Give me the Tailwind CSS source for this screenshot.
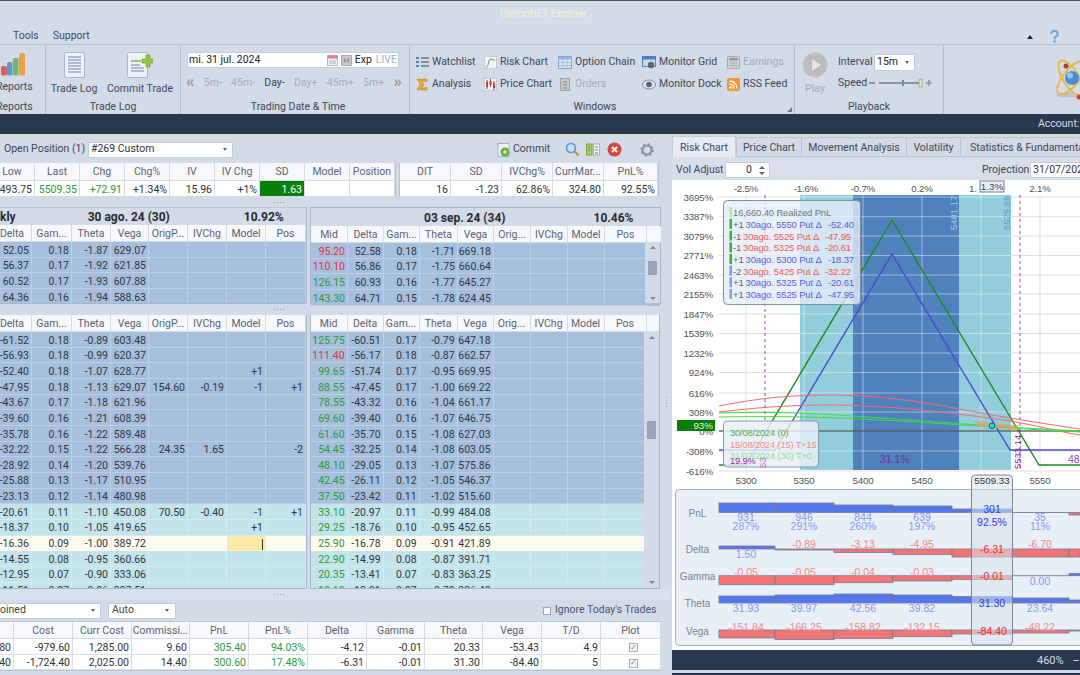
<!DOCTYPE html>
<html lang="en">
<head>
<meta charset="UTF-8">
<script src="https://cdn.jsdelivr.net/npm/@tailwindcss/browser@4"></script>
<title>OptionNET Explorer</title>
</head>
<body class="w-[1080px] h-[675px] overflow-hidden bg-[#d3dbe9] font-['Roboto',sans-serif] text-[10.5px] text-[#3f4654] leading-none">

<!-- title + menu -->
<header class="h-[45px] border-t border-[#555] bg-[#d5dce9] border-b-[1px] border-b-[#b7c2d4]">
  <div class="h-[24px] pl-[500px] pt-[8px] text-[10px] text-[#f3f0cd]">OptionNET Explorer</div>
  <div class="flex items-center h-[19px] pl-[13px] gap-[14px] text-[#3b4a62] pt-[4px]">
    <span>Tools</span><span>Support</span>
    <span class="ml-auto flex items-center gap-[17px] pr-[21px]">
      <span class="w-0 h-0 border-x-[3px] border-x-transparent border-b-[4px] border-b-[#222]"></span>
      <svg width="9" height="13" viewBox="0 0 10 14"><path d="M1.500 4a3.500 3.300 0 1 1 5 3c-1 .7-1.500 1.200-1.500 3" fill="none" stroke="#6fa8dc" stroke-width="2.400"/><circle cx="5" cy="12.500" r="1.400" fill="#6fa8dc"/></svg>
    </span>
  </div>
</header>

<!-- ribbon -->
<section class="flex h-[69px] bg-[#d3dbe8]">
  <div class="w-[46px] shrink-0 border-r border-[#b4c0d2] flex flex-col overflow-hidden">
    <div class="h-[53px] pt-[8px]">
      <svg class="ml-[1px]" width="25" height="23" viewBox="0 0 25 23"><rect x="0" y="13" width="6" height="9.500" rx="1.500" fill="#d9605a"/><rect x="6" y="9" width="5.500" height="13.500" rx="1.500" fill="#5b9bd5"/><rect x="12" y="5" width="5.500" height="17.500" rx="1.500" fill="#7fb85a"/><rect x="18" y="0" width="6" height="22.500" rx="1.500" fill="#eda04a"/></svg>
      <div class="-ml-[4px] mt-[6px] whitespace-nowrap">Reports</div>
    </div>
    <div class="-ml-[4px] h-[16px] flex items-center pt-[2px]">Reports</div>
  </div>

  <div class="w-[135px] shrink-0 border-r border-[#b4c0d2] flex flex-col">
    <div class="h-[53px] flex pt-[7px]">
      <div class="w-[62px] flex flex-col items-center -ml-[3px]">
        <svg width="21" height="26" viewBox="0 0 21 26"><rect x=".5" y=".5" width="20" height="25" rx="1.500" fill="#eef1f7" stroke="#a9b8ce"/><path d="M4 5h13M4 8h13M4 11h13M4 14h13M4 17h13M4 20h13" stroke="#96a8c8" stroke-width="1.500"/></svg>
        <span class="mt-[6px] whitespace-nowrap">Trade Log</span>
      </div>
      <div class="flex flex-col items-center ml-[2px] w-[66px]">
        <svg width="26" height="26" viewBox="0 0 26 26"><rect x=".5" y=".5" width="20" height="25" rx="1.500" fill="#eef1f7" stroke="#a9b8ce"/><path d="M4 9h10" stroke="#7fb04a" stroke-width="1.500"/><path d="M4 13h9M4 16h13M4 19h13" stroke="#96a8c8" stroke-width="1.500"/><path d="M15 7h4V3h4v4h3v4h-3v4h-4v-4h-4z" fill="#8dc63f" stroke="#6fa02c" stroke-width=".6"/></svg>
        <span class="mt-[6px] whitespace-nowrap">Commit Trade</span>
      </div>
    </div>
    <div class="h-[16px] flex items-center justify-center pt-[2px]">Trade Log</div>
  </div>

  <div class="w-[229px] shrink-0 border-r border-[#b4c0d2] flex flex-col">
    <div class="h-[53px] pl-[6px] pt-[7px]">
      <div class="w-[212px] h-[16px] bg-white border border-[#c2cddd] flex items-center pl-[1px] pr-[1px] pt-[1px] text-[#222]">
        <span>mi. 31 jul. 2024</span>
        <svg class="ml-auto" width="11" height="11" viewBox="0 0 11 11"><rect x=".5" y=".5" width="10" height="10" fill="#f4f0f0" stroke="#b7b7c7"/><rect x=".5" y=".5" width="10" height="3" fill="#e27f8b"/><path d="M2 6h7M2 8h7" stroke="#9bb0d6"/></svg>
        <span class="ml-[3px] w-[11px] h-[11px] bg-[#c9c9c9] border border-[#aaa] text-[8px] text-[#777] flex items-center justify-center">H</span>
        <span class="ml-[3px]">Exp</span>
        <span class="ml-[4px] text-[#a9b2c3]">LIVE</span>
      </div>
      <div class="-ml-[1px] mt-[9px] w-[216px] flex justify-between items-center text-[#a7afbe]">
        <span class="text-[17px] text-[#9d9d9d] -mt-[4px] font-bold">«</span><span>5m-</span><span>45m-</span><span class="text-[#333f55]">Day-</span><span>Day+</span><span>45m+</span><span>5m+</span><span class="text-[17px] text-[#9d9d9d] -mt-[4px] font-bold">»</span>
      </div>
    </div>
    <div class="h-[16px] flex items-center justify-center pl-[6px] pt-[2px]">Trading Date &amp; Time</div>
  </div>

  <div class="relative w-[385px] shrink-0 border-r border-[#b4c0d2] flex flex-col">
    <div class="h-[53px] pl-[6px] pt-[6px] grid grid-cols-[68px_74px_84px_85px_auto] grid-rows-[22px_22px] items-center whitespace-nowrap">
      <div class="flex items-center gap-[3px]"><svg width="13" height="12" viewBox="0 0 13 12"><path d="M5 2h8M5 6h8M5 10h8" stroke="#444" stroke-width="1.200"/><rect y="1" width="3" height="2" fill="#4f81bd"/><rect y="5" width="3" height="2" fill="#4f81bd"/><rect y="9" width="3" height="2" fill="#4f81bd"/></svg>Watchlist</div>
      <div class="flex items-center gap-[3px]"><svg width="13" height="13" viewBox="0 0 13 13"><rect x=".5" y=".5" width="12" height="12" fill="#f3f5f8" stroke="#c4ccd8"/><path d="M2 11c3 0 2-8 5-8 2 0 2 2 4 1" fill="none" stroke="#4a9a4a"/></svg>Risk Chart</div>
      <div class="flex items-center gap-[3px]"><svg width="14" height="13" viewBox="0 0 14 13"><rect x=".5" y=".5" width="13" height="12" fill="#dbe8f6" stroke="#7fa3cf"/><rect x=".5" y=".5" width="13" height="3" fill="#8fb4de"/><path d="M5 3v10M9 3v10M1 6.500h12M1 9.500h12" stroke="#8fb0d8" stroke-width=".7"/></svg>Option Chain</div>
      <div class="flex items-center gap-[3px]"><svg width="14" height="13" viewBox="0 0 14 13"><rect x=".5" y=".5" width="13" height="10" fill="#c8daf0" stroke="#5b85b8"/><rect x=".5" y=".5" width="13" height="3" fill="#4f81bd"/><circle cx="9" cy="9" r="3.200" fill="#666"/></svg>Monitor Grid</div>
      <div class="flex items-center gap-[3px] text-[#a4acba]"><svg width="13" height="13" viewBox="0 0 13 13"><rect x=".5" y=".5" width="12" height="12" rx="1" fill="#d0d0d0" stroke="#aaa"/><rect x="2" y="2" width="9" height="2.500" fill="#999"/><path d="M3 7h7M3 9.500h7" stroke="#aaa"/></svg>Earnings</div>
      <div class="flex items-center gap-[3px]"><svg width="12" height="13" viewBox="0 0 12 13" class="mr-[1px]"><path d="M1 1h10v3L5.500 2.500 8 6.500 5.500 10.500 11 9v3H1l3-5.500z" fill="#e7a53f" stroke="#c07f20" stroke-width=".5"/></svg>Analysis</div>
      <div class="flex items-center gap-[3px]"><svg width="13" height="13" viewBox="0 0 13 13"><rect x=".5" y=".5" width="12" height="12" fill="#f3f5f8" stroke="#c4ccd8"/><path d="M3 2v9M6.500 1v8M10 3v9" stroke="#555"/><rect x="2" y="4" width="2" height="5" fill="#d13b3b"/><rect x="5.500" y="3" width="2" height="4" fill="#d13b3b"/><rect x="9" y="5" width="2" height="5" fill="#d13b3b"/></svg>Price Chart</div>
      <div class="flex items-center gap-[3px] text-[#a4acba]"><svg width="14" height="13" viewBox="0 0 14 13"><rect x="2.500" y=".5" width="9" height="12" fill="#c8c8c8" stroke="#a2a2a2"/><path d="M5 4h4M5 7h4M5 10h4" stroke="#888"/></svg>Orders</div>
      <div class="flex items-center gap-[3px]"><svg width="14" height="11" viewBox="0 0 14 11"><ellipse cx="7" cy="5.500" rx="6.500" ry="4.500" fill="#dfe6ee" stroke="#7d8ba0"/><circle cx="7" cy="5.500" r="2.800" fill="#55657c"/></svg>Monitor Dock</div>
      <div class="flex items-center gap-[3px]"><svg width="13" height="13" viewBox="0 0 13 13"><rect width="13" height="13" rx="2" fill="#ee9a2d"/><circle cx="3.500" cy="9.500" r="1.300" fill="#fff"/><path d="M2.500 6a4.500 4.500 0 0 1 4.500 4.500M2.500 3a7.500 7.500 0 0 1 7.500 7.500" fill="none" stroke="#fff" stroke-width="1.300"/></svg>RSS Feed</div>
    </div>
    <div class="h-[16px] flex items-center justify-center pr-[14px] pt-[2px]">Windows</div>
    <span class="absolute right-[2px] bottom-[2px] w-0 h-0 border-l-[5px] border-l-transparent border-b-[5px] border-b-[#6d7a8f]"></span>
  </div>

  <div class="w-[149px] shrink-0 border-r border-[#b4c0d2] flex flex-col">
    <div class="h-[53px] flex pl-[7px] pt-[7px]">
      <div class="w-[26px] flex flex-col items-center text-[#a4acba]">
        <svg width="26" height="26" viewBox="0 0 26 26"><circle cx="13" cy="13" r="12.500" fill="#bcbcbc" stroke="#cfcfcf"/><path d="M10 7l9 6-9 6z" fill="#e3e3e3"/></svg>
        <span class="mt-[6px]">Play</span>
      </div>
      <div class="ml-[10px]">
        <div class="flex items-center h-[20px]"><span class="w-[36px] pt-[1px]">Interval</span><span class="w-[41px] h-[17px] bg-white border border-[#c2cddd] flex items-center justify-between px-[2px] text-[#222]">15m<span class="w-0 h-0 mr-[3px] border-x-[2px] border-x-transparent border-t-[3px] border-t-[#666]"></span></span></div>
        <div class="flex items-center h-[20px] mt-[1px]"><span class="w-[28px] pt-[1px]">Speed</span>
          <svg class="ml-[3px]" width="64" height="10" viewBox="0 0 64 10"><path d="M0 5h6M10 5h41" stroke="#8896ab" stroke-width="2"/><rect x="33" y="2" width="2" height="6" fill="#7b8a9f"/><rect x="50" y="1" width="3" height="8" fill="#f4e8a8" stroke="#8a8a70" stroke-width=".6"/><path d="M57 5h6M60 2v6" stroke="#8896ab" stroke-width="1.500"/></svg>
        </div>
      </div>
    </div>
    <div class="h-[16px] flex items-center justify-center pt-[2px]">Playback</div>
  </div>

  <div class="flex-1 flex justify-end pt-[10px] overflow-hidden">
    <svg width="30" height="46" viewBox="0 0 30 46">
      <ellipse cx="18" cy="40" rx="12" ry="2.500" fill="#bfc4cc"/>
      <ellipse cx="21" cy="23" rx="8" ry="20" fill="none" stroke="#e3b945" stroke-width="1.800" transform="rotate(-32 21 23)"/>
      <ellipse cx="21" cy="23" rx="8" ry="20" fill="none" stroke="#e3b945" stroke-width="1.800" transform="rotate(38 21 23)"/>
      <circle cx="22" cy="23" r="7" fill="#4f8ccf"/><circle cx="20" cy="20.500" r="3" fill="#9cc8ef"/>
      <circle cx="16" cy="11" r="2.500" fill="#a5472e"/><circle cx="29" cy="42" r="2.500" fill="#dd3b3b"/>
    </svg>
  </div>
</section>

<div class="h-[20px] bg-[#29374f] text-[#d4dbe6] flex items-center pl-[1038px] whitespace-nowrap">Account:</div>
<div class="h-[1px] bg-[#e5dfaf]"></div>

<main class="flex h-[540px]">
  <!-- left side -->
  <div class="w-[670px] shrink-0">
    <div class="h-[28px] flex items-center pl-[4px] pr-[16px] pt-[1px] whitespace-nowrap">
      <span class="w-[84px] shrink-0">Open Position (1)</span>
      <div class="shrink-0 w-[145px] h-[16px] bg-white border border-[#c2cddd] flex items-center px-[2px] text-[#333]">#269 Custom<span class="ml-auto mr-[3px] w-0 h-0 border-x-[2.500px] border-x-transparent border-t-[3px] border-t-[#666]"></span></div>
      <svg class="ml-[264px] shrink-0" width="14" height="14" viewBox="0 0 14 14"><rect x="1" y=".5" width="11" height="13" fill="#eef1f7" stroke="#9fb0c8"/><circle cx="8" cy="9" r="4.500" fill="#6dac3d"/><path d="M6 9h4M8 7v4" stroke="#fff"/></svg>
      <span class="ml-[2px] w-[35px] shrink-0">Commit</span>
      <svg class="ml-[17px] shrink-0" width="15" height="15" viewBox="0 0 15 15"><circle cx="6" cy="6" r="4.500" fill="#c7e0f6" stroke="#5e96cc" stroke-width="1.600"/><path d="M9.500 9.500l4 4" stroke="#d68b34" stroke-width="2.200"/></svg>
      <svg class="ml-[6px] shrink-0" width="14" height="13" viewBox="0 0 14 13"><rect x=".5" y="1" width="5.500" height="11" fill="#a5cf6b" stroke="#7ba444"/><rect x="7.500" y="1" width="6" height="11" fill="#f4f6f8" stroke="#a7b1bd"/><path d="M2 4h2M2 7h2M9 4h3M9 7h3M9 10h3" stroke="#63813a"/></svg>
      <svg class="ml-[7px] shrink-0" width="15" height="15" viewBox="0 0 15 15"><circle cx="7.500" cy="7.500" r="7" fill="#d8453f"/><path d="M5 5l5 5M10 5l-5 5" stroke="#fff" stroke-width="1.800"/></svg>
      <svg class="ml-[18px] shrink-0" width="14" height="14" viewBox="0 0 14 14"><circle cx="7" cy="7" r="4.500" fill="none" stroke="#8895a8" stroke-width="2.200"/><circle cx="7" cy="7" r="6" fill="none" stroke="#8895a8" stroke-width="1.500" stroke-dasharray="2 2.700"/></svg>
    </div>

    <!-- position summary -->
    <div class="h-[34px] flex">
      <div class="w-[396px] overflow-hidden border-r border-[#b9c4d5]"><div class="grid grid-cols-[45px_repeat(8,45px)] -ml-[10px] w-[405px]" id="summary"></div></div>
      <div class="ml-[3px] w-[260px] border-x border-[#b9c4d5] grid grid-cols-[51px_51px_51px_51px_54px]" id="summary2"></div>
    </div>
    <div class="h-[10px] flex items-center justify-center pr-[112px]"><span class="w-[13px] h-[3px] bg-[radial-gradient(#8fa0b7_40%,transparent_45%)] bg-[length:3px_3px]"></span></div>

    <div class="flex h-[97px]">
      <div class="w-[307px] overflow-hidden border-r border-b border-[#a9b5c8]">
        <div class="h-[18px] flex items-center relative font-bold text-[12px] text-[#2b2b2b] border-t border-[#b9c4d5] whitespace-nowrap pt-[1px]"><span>kly</span><span class="ml-[72px]">30 ago. 24 (30)</span><span class="ml-[74px]">10.92%</span></div>
        <div class="-ml-[7px]" id="chainA"></div>
      </div>
      <div class="ml-[3px] w-[351px] relative border border-t-[1px] border-[#a9b5c8]">
        <div class="h-[18px] flex items-center font-bold text-[12px] text-[#2b2b2b] pl-[113px] whitespace-nowrap pt-[1px]"><span>03 sep. 24 (34)</span><span class="ml-[88px]">10.46%</span></div>
        <div id="chainB"></div>
        <div class="absolute right-0 top-[35px] bottom-0 w-[15px] bg-[#d3dbe8] flex flex-col items-center justify-between py-[3px]"><span class="w-0 h-0 border-x-[3px] border-x-transparent border-b-[3px] border-b-[#7d8798]"></span><span class="w-[9px] h-[14px] bg-[#9aa6b8] -mt-[10px]"></span><span class="w-0 h-0 border-x-[3px] border-x-transparent border-t-[3px] border-t-[#7d8798]"></span></div>
      </div>
    </div>
    <div class="h-[11px] flex items-center justify-center pr-[112px]"><span class="w-[13px] h-[3px] bg-[radial-gradient(#8fa0b7_40%,transparent_45%)] bg-[length:3px_3px]"></span></div>

    <div class="flex h-[274px]">
      <div class="w-[307px] overflow-hidden border-r border-b border-[#a9b5c8]"><div class="-ml-[7px]" id="chainC"></div></div>
      <div class="ml-[3px] w-[351px] overflow-hidden relative border-x border-b border-[#a9b5c8]">
        <div id="chainD"></div>
        <div class="absolute right-0 top-[17px] bottom-0 w-[15px] bg-[#d3dbe8] flex flex-col items-center py-[4px]"><span class="w-0 h-0 border-x-[3px] border-x-transparent border-b-[3px] border-b-[#7d8798]"></span><span class="w-[9px] h-[18px] bg-[#9aa6b8] mt-[82px]"></span><span class="mt-auto w-0 h-0 border-x-[3px] border-x-transparent border-t-[3px] border-t-[#7d8798]"></span></div>
      </div>
      <div class="w-[10px] flex items-center justify-center pb-[100px]"><span class="w-[3px] h-[12px] ml-[3px] bg-[radial-gradient(#8fa0b7_40%,transparent_45%)] bg-[length:3px_3px]"></span></div>
    </div>
    <div class="h-[11px] flex items-center justify-center pr-[112px] bg-[#d9dfeb]"><span class="w-[13px] h-[3px] bg-[radial-gradient(#8fa0b7_40%,transparent_45%)] bg-[length:3px_3px]"></span></div>

    <div class="h-[21px] flex items-center">
      <div class="-ml-[1px] w-[102px] h-[16px] bg-white border border-[#c2cddd] flex items-center pr-[2px] text-[#444] whitespace-nowrap">oined<span class="ml-auto mr-[3px] w-0 h-0 border-x-[2.500px] border-x-transparent border-t-[3px] border-t-[#666]"></span></div>
      <div class="ml-[7px] w-[68px] h-[16px] bg-white border border-[#c2cddd] flex items-center px-[3px] text-[#444]">Auto<span class="ml-auto mr-[3px] w-0 h-0 border-x-[2.500px] border-x-transparent border-t-[3px] border-t-[#666]"></span></div>
      <span class="ml-[367px] w-[8px] h-[8px] bg-white border border-[#9ba7b9] shrink-0"></span>
      <span class="ml-[4px] whitespace-nowrap text-[#4b5464]">Ignore Today's Trades</span>
    </div>
    <div class="w-[661px] border-y border-[#b9c4d5] border-r" id="trades"></div>
  </div>

  <!-- right side -->
  <div class="w-[410px] pl-[2px] overflow-hidden">
    <div class="h-[22px] flex items-end whitespace-nowrap">
      <span class="shrink-0 w-[64px] h-[21px] bg-[#e7ecf4] border border-b-0 border-[#c4cede] flex items-center justify-center pt-[2px]">Risk Chart</span>
      <span class="shrink-0 w-[66px] h-[20px] bg-[#d3dbe8] border border-[#b9c4d5] flex items-center justify-center pt-[2px]">Price Chart</span>
      <span class="shrink-0 w-[105px] h-[20px] bg-[#d3dbe8] border border-l-0 border-[#b9c4d5] flex items-center justify-center pt-[2px]">Movement Analysis</span>
      <span class="shrink-0 w-[54px] h-[20px] bg-[#d3dbe8] border border-l-0 border-[#b9c4d5] flex items-center justify-center pt-[2px]">Volatility</span>
      <span class="shrink-0 w-[140px] h-[20px] bg-[#d3dbe8] border border-l-0 border-[#b9c4d5] flex items-center pl-[9px] pt-[2px]">Statistics &amp; Fundamentals</span>
    </div>
    <div class="h-[23px] bg-[#d8dfeb] flex items-center pl-[4px] pt-[3px] whitespace-nowrap">
      <span class="w-[45px] shrink-0">Vol Adjust</span>
      <div class="shrink-0 ml-[4px] w-[45px] h-[16px] bg-white border border-[#c2cddd] flex items-center justify-end pr-[4px] text-[#333]">
        <span class="mr-[7px]">0</span>
        <span class="flex flex-col gap-[3px]"><span class="w-0 h-0 border-x-[3px] border-x-transparent border-b-[3px] border-b-[#666]"></span><span class="w-0 h-0 border-x-[3px] border-x-transparent border-t-[3px] border-t-[#666]"></span></span>
      </div>
      <span class="ml-[212px] w-[48px] shrink-0">Projection</span>
      <div class="shrink-0 w-[60px] h-[16px] bg-white border border-[#c2cddd] flex items-center pl-[2px] overflow-hidden text-[#333]">31/07/2024</div>
    </div>

    <svg id="chart" class="block bg-white font-['Liberation_Sans',sans-serif]" width="408" height="470" viewBox="672 180 408 470">
      <g id="grid"></g>
      <rect x="800" y="195" width="211" height="275" fill="#92cddc"/>
      <rect x="853" y="195" width="106" height="275" fill="#4f81bd"/>
      <g id="gridTop"></g>
      <path d="M765 195V470M1020 195V470" stroke="#a03fa8" stroke-dasharray="3 3"/>
      <line x1="719" y1="431" x2="1080" y2="431" stroke="#333"/>
      <path d="M719 465H746L892 220L1039 465H1080" fill="none" stroke="#1d8a1d" stroke-width="1.400"/>
      <path d="M719 450H775L892 254L1010 450H1080" fill="none" stroke="#4a4ad0" stroke-width="1.400"/>
      <path d="M719 406C770 396 800 395 837 395C900 395 960 410 1010 418C1040 423 1060 426 1080 429" fill="none" stroke="#f36a6a"/>
      <path d="M719 412C770 406 800 405 837 405C900 406 970 415 1010 421C1040 426 1060 432 1080 435" fill="none" stroke="#f36a6a"/>
      <path d="M719 413C780 411 830 414 880 418C940 422 1000 427 1080 431" fill="none" stroke="#3fdc3f"/>
      <path d="M719 417C780 416 830 417 880 420C940 423 1000 428 1080 432" fill="none" stroke="#3fdc3f"/>
      <path d="M975 423.500L1018 428" stroke="#d9a56a" stroke-width="5" opacity=".75"/>
      <circle cx="992" cy="425.700" r="2.800" fill="#10e0f0" stroke="#0e5a64"/>

      <g font-size="9.500">
        <text transform="translate(957 230) rotate(-90)" fill="#a9c6e2">5481.17</text>
        <text transform="translate(1010 230) rotate(-90)" fill="#5f9fd0">5525.89</text>
      </g>
      <text transform="translate(1021 469) rotate(-90)" font-size="9.500" fill="#8e2f9e">5533.14</text>
      <text x="880" y="463" font-size="10.500" fill="#7a2d9c">31.1%</text>
      <text x="1068" y="463" font-size="10.500" fill="#9b3fb0">48.</text>
      <g id="labels" font-size="9.800" letter-spacing="-.2" fill="#555"></g>

      <rect x="677" y="420" width="38" height="11" fill="#058005"/>
      <text x="713" y="429" text-anchor="end" font-size="9.800" fill="#e4f5e4">93%</text>

      <rect x="980" y="181" width="24" height="11" fill="#eef1f5" stroke="#6d7a8f"/>
      <text x="992" y="190" text-anchor="middle" font-size="9.800" fill="#444">1.3%</text>

      <!-- position tooltip -->
      <rect x="723.500" y="200.500" width="137" height="104" rx="4" fill="#e3ecf6" fill-opacity=".8" stroke="#7f8fa6"/>
      <g id="tip" font-size="9.500" letter-spacing="-.15"></g>

      <!-- date tooltip -->
      <rect x="723.500" y="421" width="95" height="46" rx="4" fill="#e6eef6" fill-opacity=".85" stroke="#8a99ad"/>
      <g font-size="9.300" letter-spacing="-.15">
        <text x="730" y="436" fill="#5aa85a">30/08/2024 (0)</text>
        <text x="730" y="447.500" fill="#f58b8b">15/08/2024 (15) T+15</text>
        <text x="730" y="459" fill="#8ee08e">31/07/2024 (30) T+0</text>
        <text x="730" y="463.500" fill="#8e2f9e">19.9%</text>
      </g>
      <text transform="translate(766 468) rotate(-90)" font-size="9.800" fill="#c078c8">53</text>

      <!-- greeks panel -->
      <rect x="675.500" y="489.500" width="420" height="156" rx="4" fill="#e8eff7" stroke="#a3aebd"/>
      <g id="greeks"></g>

      <!-- cursor -->
      <rect x="971.500" y="475" width="41" height="170" rx="4" fill="#d8e1ed" fill-opacity=".55" stroke="#7b8797"/>
      <text x="992" y="484" text-anchor="middle" font-size="9.800" fill="#333">5509.33</text>
      <g id="cursor" font-size="10.500" text-anchor="middle"></g>
    </svg>

    <div class="h-[20px] bg-[#29374f] text-[#d6dde8] flex items-center pl-[365px] whitespace-nowrap text-[11px]">460%<span class="ml-[9px]">–</span></div>
    <div class="h-[3px]"></div>
    <div class="h-[2px] bg-[#29374f]"></div>
  </div>
</main>

<script>
  // rows: [bg, cells...]
  const blue = 'bg-[#a6bfdd]', cyan = 'bg-[#c3e4ea]', cream = 'bg-[#fffbee]';
  const hd = 'h-[17px] bg-[#f6f8fb] border-r border-b border-[#d3dbe7] flex items-center justify-center pt-[2px] text-[#5b6373] overflow-hidden whitespace-nowrap';
  const td = 'border-r border-b border-white/25 flex items-center justify-end pr-[2px] pt-[3px] overflow-hidden whitespace-nowrap';

  const dark = 'text-[#2f3540]', green = 'text-[#2a9a3a]', red = 'text-[#e8303c]';

  function headerRow(cols, names) {
    return `<div class="grid ${cols}">` + names.map(n => `<div class="${hd}">${n}</div>`).join('') + '</div>';
  }
  function chain(id, cols, names, rows, nameColor) {
    let html = headerRow(cols, names);
    rows.forEach(r => {
      const cells = r.cells.map((c, i) => {
        let cls = td + ' ' + (nameColor && i === 0 ? (r.red ? red : green) : dark);
        if (r.caret === i) cls += ' bg-[#fde9a8]';
        const caret = r.caret === i ? '<span class="w-px h-[11px] bg-[#333]"></span>' : '';
        return `<div class="${cls}">${c}${caret}</div>`;
      }).join('');
      html += `<div class="grid ${cols} h-[15.67px] ${r.bg}">${cells}</div>`;
    });
    document.getElementById(id).innerHTML = html;
  }

  const L = 'grid-cols-[39px_40px_39px_38px_39px_39px_39px_40px]';
  const LN = ['Delta', 'Gam...', 'Theta', 'Vega', 'OrigP...', 'IVChg', 'Model', 'Pos'];
  const RN = ['Mid', 'Delta', 'Gam...', 'Theta', 'Vega', 'Orig...', 'IVChg', 'Model', 'Pos', ''];
  const RC = 'grid-cols-[37px_36px_36px_38px_36px_37px_37px_37px_42px_15px]';

  const mk = (bg, cells, extra) => Object.assign({ bg, cells: cells.concat(Array(8 - cells.length).fill('')) }, extra);

  chain('chainA', L, LN, [
    ['52.05', '0.18', '-1.87', '629.07'], ['56.37', '0.17', '-1.92', '621.85'],
    ['60.52', '0.17', '-1.93', '607.88'], ['64.36', '0.16', '-1.94', '588.63']
  ].map(c => mk(blue, c)));

  chain('chainC', L, LN, [
    mk(blue, ['-61.52', '0.18', '-0.89', '603.48']),
    mk(blue, ['-56.93', '0.18', '-0.99', '620.37']),
    mk(blue, ['-52.40', '0.18', '-1.07', '628.77', '', '', '+1', '']),
    mk(blue, ['-47.95', '0.18', '-1.13', '629.07', '154.60', '-0.19', '-1', '+1']),
    mk(blue, ['-43.67', '0.17', '-1.18', '621.96']),
    mk(blue, ['-39.60', '0.16', '-1.21', '608.39']),
    mk(blue, ['-35.78', '0.16', '-1.22', '589.48']),
    mk(blue, ['-32.22', '0.15', '-1.22', '566.28', '24.35', '1.65', '', '-2']),
    mk(blue, ['-28.92', '0.14', '-1.20', '539.76']),
    mk(blue, ['-25.88', '0.13', '-1.17', '510.95']),
    mk(blue, ['-23.13', '0.12', '-1.14', '480.98']),
    mk(cyan, ['-20.61', '0.11', '-1.10', '450.08', '70.50', '-0.40', '-1', '+1']),
    mk(cyan, ['-18.37', '0.10', '-1.05', '419.65', '', '', '+1', '']),
    mk(cream, ['-16.36', '0.09', '-1.00', '389.72'], { caret: 6 }),
    mk(cyan, ['-14.55', '0.08', '-0.95', '360.66']),
    mk(cyan, ['-12.95', '0.07', '-0.90', '333.06']),
    mk(cyan, ['-11.51', '0.07', '-0.86', '307.51'])
  ]);

  const mkR = (bg, cells, extra) => Object.assign({ bg, cells: cells.concat(Array(9 - cells.length).fill('')) }, extra);

  chain('chainB', RC, RN, [
    mkR(blue, ['95.20', '52.58', '0.18', '-1.71', '669.18'], { red: true }),
    mkR(blue, ['110.10', '56.86', '0.17', '-1.75', '660.64'], { red: true }),
    mkR(blue, ['126.15', '60.93', '0.16', '-1.77', '645.27']),
    mkR(blue, ['143.30', '64.71', '0.15', '-1.78', '624.45'])
  ], true);

  chain('chainD', RC, RN, [
    mkR(blue, ['125.75', '-60.51', '0.17', '-0.79', '647.18']),
    mkR(blue, ['111.40', '-56.17', '0.18', '-0.87', '662.57'], { red: true }),
    mkR(blue, ['99.65', '-51.74', '0.17', '-0.95', '669.95']),
    mkR(blue, ['88.55', '-47.45', '0.17', '-1.00', '669.22']),
    mkR(blue, ['78.55', '-43.32', '0.16', '-1.04', '661.17']),
    mkR(blue, ['69.60', '-39.40', '0.16', '-1.07', '646.75']),
    mkR(blue, ['61.60', '-35.70', '0.15', '-1.08', '627.03']),
    mkR(blue, ['54.45', '-32.25', '0.14', '-1.08', '603.05']),
    mkR(blue, ['48.10', '-29.05', '0.13', '-1.07', '575.86']),
    mkR(blue, ['42.45', '-26.11', '0.12', '-1.05', '546.37']),
    mkR(blue, ['37.50', '-23.42', '0.11', '-1.02', '515.60']),
    mkR(cyan, ['33.10', '-20.97', '0.11', '-0.99', '484.08']),
    mkR(cyan, ['29.25', '-18.76', '0.10', '-0.95', '452.65']),
    mkR(cream, ['25.90', '-16.78', '0.09', '-0.91', '421.89']),
    mkR(cyan, ['22.90', '-14.99', '0.08', '-0.87', '391.71']),
    mkR(cyan, ['20.35', '-13.41', '0.07', '-0.83', '363.25']),
    mkR(cyan, ['18.10', '-12.01', '0.07', '-0.79', '336.48'])
  ], true);

  // position summary
  const sumVal = 'h-[16px] border-r border-b border-[#d3dbe7] flex items-center justify-end pr-[2px] pt-[3px] whitespace-nowrap';
  const white = 'bg-white text-[#333]', whiteGreen = 'bg-white text-[#2a9a3a]', sdCell = 'bg-[#0a800a] text-white';
  const sumHead = hd.replace('h-[17px]', 'h-[18px]');
  const s1 = [['Low', '5493.75', white], ['Last', '5509.35', whiteGreen], ['Chg', '+72.91', whiteGreen], ['Chg%', '+1.34%', white], ['IV', '15.96', white], ['IV Chg', '+1%', white], ['SD', '1.63', sdCell], ['Model', '', white], ['Position', '', white]];
  document.getElementById('summary').innerHTML = s1.map(c => `<div class="${sumHead}">${c[0]}</div>`).join('') + s1.map(c => `<div class="${sumVal} ${c[2]}">${c[1]}</div>`).join('');
  const s2 = [['DIT', '16'], ['SD', '-1.23'], ['IVChg%', '62.86%'], ['CurrMar...', '324.80'], ['PnL%', '92.55%']];
  document.getElementById('summary2').innerHTML = s2.map(c => `<div class="${sumHead}">${c[0]}</div>`).join('') + s2.map(c => `<div class="${sumVal} ${white}">${c[1]}</div>`).join('');

  // trades
  const tc = 'grid-cols-[14px_59px_59px_58px_59px_59px_59px_58px_58px_59px_59px_60px]';
  const tn = ['', 'Cost', 'Curr Cost', 'Commissi...', 'PnL', 'PnL%', 'Delta', 'Gamma', 'Theta', 'Vega', 'T/D', 'Plot'];
  const tr = [
    ['80', '-979.60', '1,285.00', '9.60', '305.40', '94.03%', '-4.12', '-0.01', '20.33', '-53.43', '4.9'],
    ['.40', '-1,724.40', '2,025.00', '14.40', '300.60', '17.48%', '-6.31', '-0.01', '31.30', '-84.40', '5']
  ];
  const tv = 'h-[15.5px] bg-white border-r border-b border-[#d9dfe9] flex items-center justify-end pr-[2px] pt-[3px] overflow-hidden whitespace-nowrap';
  const box = '<span class="w-[9px] h-[9px] bg-[#f1f3f6] border border-[#aab3c0] text-[8px] flex items-center justify-center text-[#7d8898] mr-[20px]">✓</span>';
  document.getElementById('trades').innerHTML = headerRow(tc, tn) + tr.map(r =>
    `<div class="grid ${tc}">` + r.map((v, i) => `<div class="${tv} ${i === 4 || i === 5 ? 'text-[#2a9a3a]' : 'text-[#333]'}">${v}</div>`).join('') + `<div class="${tv}">${box}</div></div>`
  ).join('');

  // --- chart, drawn as svg ---
  const NS = 'http://www.w3.org/2000/svg';
  function el(parent, tag, attrs, text) {
    const e = document.createElementNS(NS, tag);
    for (const k in attrs) e.setAttribute(k, attrs[k]);
    if (text !== undefined) e.textContent = text;
    document.getElementById(parent).appendChild(e);
  }
  const xs = [746, 804, 863, 922, 981, 1040];
  const ys = [197, 216.7, 236, 255.5, 275, 294, 314, 333.5, 353, 372.5, 393, 412, 431, 451, 471];
  const yl = ['3695%', '3387%', '3079%', '2771%', '2463%', '2155%', '1847%', '1539%', '1232%', '924%', '616%', '308%', '0%', '-308%', '-616%'];
  ['grid', 'gridTop'].forEach(g => {
    const col = g === 'grid' ? '#dfdfdf' : 'rgba(255,255,255,.45)';
    const x1 = g === 'grid' ? 719 : 800, x2 = g === 'grid' ? 1080 : 1011;
    ys.forEach(y => el(g, 'line', { x1, x2, y1: y, y2: y, stroke: col }));
    xs.forEach(x => { if (g === 'grid' || (x > 800 && x < 1011)) el(g, 'line', { x1: x, x2: x, y1: 195, y2: 470, stroke: col }); });
  });
  ys.forEach((y, i) => el('labels', 'text', { x: 713, y: y + 3.5, 'text-anchor': 'end' }, yl[i]));
  [['-2.5%', 746], ['-1.6%', 806], ['-0.7%', 863], ['0.2%', 922], ['1.', 973], ['2.1%', 1040]].forEach(t => el('labels', 'text', { x: t[1], y: 192, 'text-anchor': 'middle' }, t[0]));
  [5300, 5350, 5400, 5450, 5550].forEach((v, i) => el('labels', 'text', { x: [746, 804, 863, 922, 1040][i], y: 484, 'text-anchor': 'middle' }, v));

  const blueT = '#5b5bea', redT = '#ee5a5a';
  el('tip', 'text', { x: 733, y: 216, fill: '#6f7680' }, '16,660.40 Realized PnL');
  [
    ['+1', '30ago. 5550 Put Δ', '-52.40', blueT, '#33b733'],
    ['-1', '30ago. 5525 Put Δ', '-47.95', redT, '#33b733'],
    ['-1', '30ago. 5325 Put Δ', '-20.61', redT, '#33b733'],
    ['+1', '30ago. 5300 Put Δ', '-18.37', blueT, '#33b733'],
    ['-2', '30ago. 5425 Put Δ', '-32.22', redT, '#7f9fe8'],
    ['+1', '30ago. 5325 Put Δ', '-20.61', blueT, '#7f9fe8'],
    ['+1', '30ago. 5525 Put Δ', '-47.95', blueT, '#7f9fe8']
  ].forEach((r, i) => {
    const y = 228 + i * 11.65;
    el('tip', 'rect', { x: 729.5, y: y - 9, width: 2.5, height: 10, fill: r[4] });
    el('tip', 'text', { x: 733, y, fill: '#666' }, r[0]);
    el('tip', 'text', { x: r[0] === '+1' ? 745.5 : 743, y, fill: r[3] }, r[1]);
    el('tip', 'text', { x: r[0] === '+1' ? 854 : 851, y, fill: r[3], 'text-anchor': 'end' }, r[2]);
  });
  el('tip', 'rect', { x: 729.5, y: 207, width: 2.5, height: 10, fill: '#b5e8b5' });

  // greeks: [row label, label y, baseline, bar ends]
  const edges = [719, 775, 834, 893, 952, 1012, 1069, 1080];
  const B = '#5577ee', Rr = '#f27477';
  const rows = [
    { name: 'PnL', ly: 517, base: 512.5, ends: [503, 503, 505, 506, 509, 512.5, 515] },
    { name: 'Delta', ly: 553, base: 549, ends: [546, 550, 552.5, 554.5, 557, 557, 557] },
    { name: 'Gamma', ly: 580, base: 575.7, ends: [584.7, 584.7, 582.7, 581, 579.5, 575.7, 573.5] },
    { name: 'Theta', ly: 607, base: 603, ends: [596, 595, 594, 595, 596.5, 598, 600] },
    { name: 'Vega', ly: 635, base: 630, ends: [638, 639.5, 638.5, 636.7, 634, 633, 631] }
  ];
  rows.forEach(r => {
    el('greeks', 'text', { x: 697.5, y: r.ly, 'text-anchor': 'middle', 'font-size': 10, fill: '#7a8290' }, r.name);
    r.ends.forEach((e, i) => {
      const h = Math.abs(e - r.base);
      if (h < 0.5) {
        el('greeks', 'line', { x1: edges[i], x2: edges[i + 1], y1: r.base, y2: r.base, stroke: '#7d8797' });
      } else {
        el('greeks', 'rect', { x: edges[i], y: Math.min(e, r.base), width: edges[i + 1] - edges[i], height: h, fill: e < r.base ? B : Rr, stroke: '#747d8c', 'stroke-width': 0.8 });
      }
    });
  });
  const gtxt = (t, x, y, fill) => el('greeks', 'text', { x, y, 'text-anchor': 'middle', 'font-size': 10.5, fill }, t);
  const lb = '#8c95f5', lr = '#f28a8a';
  [['931', '287%', 746], ['946', '291%', 804], ['844', '260%', 863], ['639', '197%', 922], ['35', '11%', 1040]].forEach(t => { gtxt(t[0], t[2], 521, lb); gtxt(t[1], t[2], 529.5, lb); });
  gtxt('1.50', 746, 557.5, lb);
  [['-0.89', 804], ['-3.13', 863], ['-4.95', 922], ['-6.70', 1040]].forEach(t => gtxt(t[0], t[1], 548, lr));
  [['-0.05', 746], ['-0.05', 804], ['-0.04', 863], ['-0.03', 922]].forEach(t => gtxt(t[0], t[1], 576, lr));
  gtxt('0.00', 1040, 585, lb);
  [['31.93', 746], ['39.97', 804], ['42.56', 863], ['39.82', 922], ['23.64', 1040]].forEach(t => gtxt(t[0], t[1], 612, lb));
  [['-151.84', 746], ['-166.25', 804], ['-158.82', 863], ['-132.15', 922], ['-48.22', 1040]].forEach(t => gtxt(t[0], t[1], 630.5, lr));

  [['301', 513, '#3535f0'], ['92.5%', 526, '#3535f0'], ['-6.31', 553, '#ee2a2a'], ['-0.01', 579.5, '#ee2a2a'], ['31.30', 607, '#3535f0'], ['-84.40', 635, '#ee2a2a']]
    .forEach(t => el('cursor', 'text', { x: 992, y: t[1], fill: t[2] }, t[0]));
</script>
</body>
</html>
